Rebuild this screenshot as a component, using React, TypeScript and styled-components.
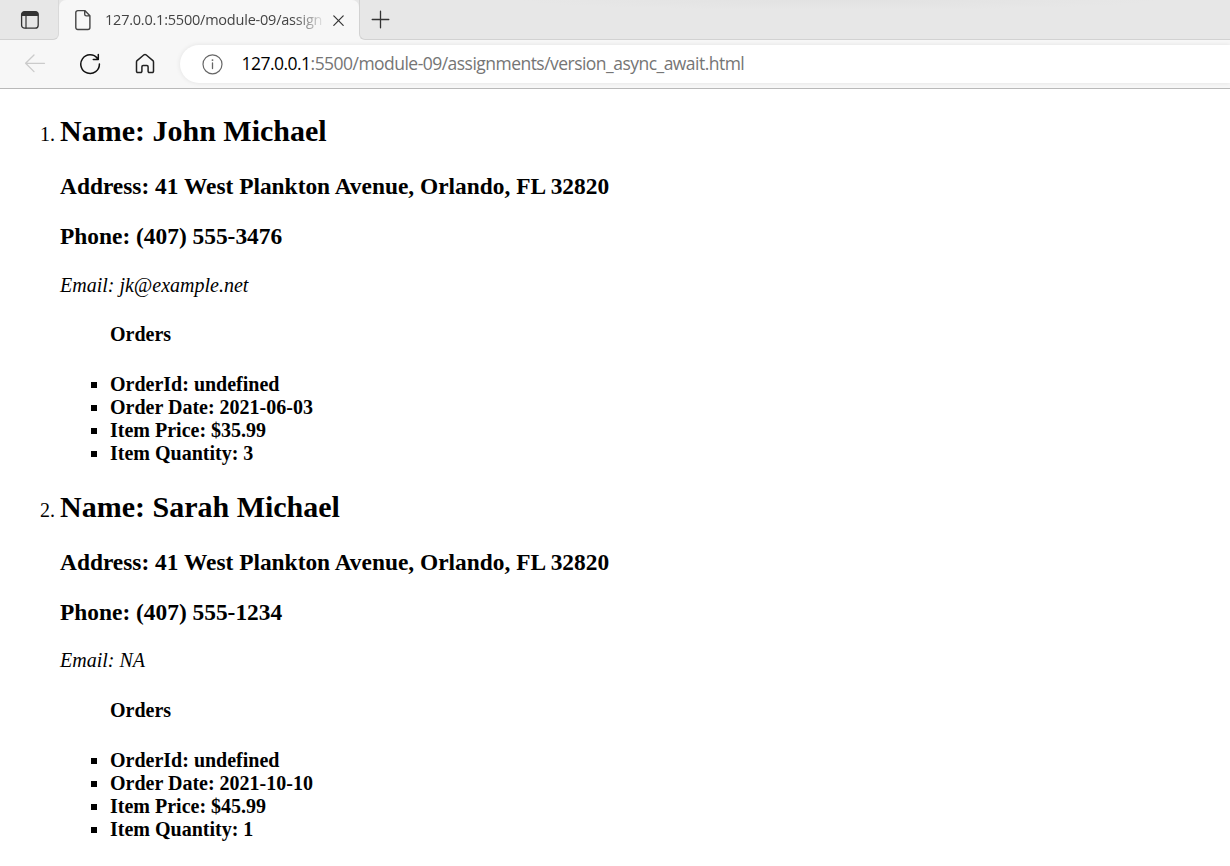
import React from "react";
import styled, { createGlobalStyle } from "styled-components";

const GlobalStyle = createGlobalStyle`
  body { margin: 0; background: #fff; }
`;

const Window = styled.div`
  width: 1230px;
  height: 866px;
  overflow: hidden;
  display: flex;
  flex-direction: column;
  background: #fff;
`;

const BrowserChrome = styled.header`
  flex: none;
  height: 88px;
  display: flex;
  flex-direction: column;
  background: #f7f7f7;
  border-bottom: 1px solid #b9b9b9;
  font-family: "Open Sans", "Noto Sans", sans-serif;
`;

const TabStrip = styled.div`
  display: flex;
  height: 40px;
`;

const StripSegment = styled.div<{ $side: "left" | "right" }>`
  box-sizing: border-box;
  display: flex;
  align-items: center;
  height: 40px;
  background: #e7e7e7;
  border-bottom: 1px solid #d2d2d2;
  ${({ $side }) =>
    $side === "left"
      ? `width: 59px; padding-left: 20px; border-right: 1px solid #d9d9d9; border-bottom-right-radius: 6px;`
      : `flex: 1; padding-left: 11px; border-left: 1px solid #d2d2d2; border-bottom-left-radius: 6px;
         background: radial-gradient(ellipse 320px 10px at 480px 0, #e2e2e2, #e7e7e7);`}
`;

const TabSlot = styled.div`
  background: #e7e7e7;
  width: 300px;
  height: 34px;
`;

const Tab = styled.div`
  box-sizing: border-box;
  display: flex;
  align-items: center;
  width: 300px;
  height: 40px;
  padding: 0 12px 0 16px;
  background: #f7f7f7;
  border-radius: 7px 7px 0 0;
`;

const TabTitle = styled.span`
  width: 219px;
  margin-left: 13px;
  margin-right: 9px;
  overflow: hidden;
  white-space: nowrap;
  font-size: 14.5px;
  line-height: 24px;
  letter-spacing: -0.22px;
  color: #444;
  mask-image: linear-gradient(to right, #000 188px, transparent 221px);
`;

const Toolbar = styled.div`
  display: flex;
  align-items: center;
  height: 48px;
  padding-left: 24px;
`;

const NavIcon = styled.span`
  display: flex;
  width: 55px;
`;

const AddressBar = styled.div`
  box-sizing: border-box;
  display: flex;
  align-items: center;
  flex: 1;
  height: 38px;
  margin-left: -9px;
  padding-left: 22px;
  border-radius: 19px 0 0 19px;
  background: #fff;
  box-shadow: 0 0 5px rgba(0, 0, 0, 0.09);
`;

const Url = styled.span`
  margin: 0 0 2px 18.5px;
  font-size: 17.5px;
  line-height: 26px;
  letter-spacing: -0.53px;
  white-space: nowrap;
  color: #757575;
`;

const Host = styled.span`
  color: #000;
`;

const Page = styled.main`
  flex: 1;
  display: flow-root;
  padding: 0 10px;
  font-family: "Liberation Serif", "Times New Roman", serif;
  font-size: 20px;
  color: #000;
`;

const CustomerList = styled.ol`
  margin: 25px 0 0;
  padding-left: 50px;
`;

const Name = styled.h2`
  margin: 25px 0;
  font-size: 30px;
  line-height: 34px;

  li:first-child > & { margin-top: 0; }
`;

const Detail = styled.h3`
  margin: 23px 0;
  font-size: 23.4px;
  line-height: 27px;
`;

const Email = styled.em`
  display: block;
  margin-top: 24px;
  line-height: 23px;

  li:last-child > & { margin-top: 23px; }
`;

const Orders = styled.ul`
  margin: 0;
  padding-left: 50px;
  list-style-type: square;
  font-weight: bold;
  line-height: 23px;
`;

const OrdersTitle = styled.h4`
  margin: 26px 0 27px;
  font-size: 20px;

  li:last-child > ul > & { margin-top: 27px; }
`;

const stroke = {
  fill: "none",
  stroke: "currentColor",
  strokeLinecap: "round",
  strokeLinejoin: "round",
} as const;

const TabActionsIcon = () => (
  <svg width="20" height="20" viewBox="0 0 20 20" color="#333">
    <rect x="1.6" y="1.6" width="16.6" height="16.6" rx="3" {...stroke} strokeWidth="1.3" />
    <path d="M1.5 6V4.4a3 3 0 0 1 3-3h10.8a3 3 0 0 1 3 3V6z" fill="currentColor" />
    <path d="M6 6v12" {...stroke} strokeWidth="1.2" />
  </svg>
);

const FileIcon = () => (
  <svg width="17" height="22" viewBox="0 0 17 22" color="#444">
    <path d="M2.8 1.6h7l5.1 5.2v11.7a2 2 0 0 1-2 2H2.8a2 2 0 0 1-2-2V3.6a2 2 0 0 1 2-2zM9.7 1.8v3.4a1.7 1.7 0 0 0 1.7 1.7h3.4" {...stroke} strokeWidth="1.4" />
  </svg>
);

const CloseIcon = () => (
  <svg width="12" height="12" viewBox="0 0 12 12" color="#333">
    <path d="M0.8 1.9l9.4 9.4M10.2 1.9l-9.4 9.4" {...stroke} strokeWidth="1.2" />
  </svg>
);

const PlusIcon = () => (
  <svg width="19" height="19" viewBox="0 0 19 19" color="#333">
    <path d="M1.2 9.5h16.6M9.5 1.2v16.6" {...stroke} strokeWidth="1.3" />
  </svg>
);

const BackIcon = () => (
  <svg width="22" height="22" viewBox="0 0 22 22" color="#cbcbcb">
    <path d="M20.5 10.3H1.6M10 2l-8.4 8.3L10 18.6" {...stroke} strokeWidth="1.3" />
  </svg>
);

const ReloadIcon = () => (
  <svg width="22" height="22" viewBox="0 0 22 22" color="#111">
    <path d="M18.5 5.5A9.3 9.3 0 1 0 20.4 11M19.3 1.4v5h-5" {...stroke} strokeWidth="1.5" />
  </svg>
);

const HomeIcon = () => (
  <svg width="22" height="22" viewBox="0 0 22 22" color="#222">
    <path d="M2.5 8.9a1.7 1.7 0 0 1 .6-1.3l6.9-5.8a1.6 1.6 0 0 1 2 0l6.9 5.8a1.7 1.7 0 0 1 .6 1.3v9.4a1.2 1.2 0 0 1-1.2 1.2h-3a1.2 1.2 0 0 1-1.2-1.2v-4.6a1.2 1.2 0 0 0-1.2-1.2H9.1a1.2 1.2 0 0 0-1.2 1.2v4.6a1.2 1.2 0 0 1-1.2 1.2h-3a1.2 1.2 0 0 1-1.2-1.2z" {...stroke} strokeWidth="1.5" />
  </svg>
);

const InfoIcon = () => (
  <svg width="21" height="21" viewBox="0 0 21 21" color="#666">
    <circle cx="10.5" cy="10.3" r="9.5" {...stroke} strokeWidth="1.2" />
    <path d="M10.5 9v5.5" {...stroke} strokeWidth="1.3" />
    <circle cx="10.5" cy="6.1" r="0.95" fill="currentColor" />
  </svg>
);

const customers = [
  { name: "John Michael", phone: "(407) 555-3476", email: "jk@example.net", date: "2021-06-03", price: "$35.99", quantity: 3 },
  { name: "Sarah Michael", phone: "(407) 555-1234", email: "NA", date: "2021-10-10", price: "$45.99", quantity: 1 },
];

export default function App() {
  return (
    <Window>
      <GlobalStyle />
      <BrowserChrome>
        <TabStrip>
          <StripSegment $side="left"><TabActionsIcon /></StripSegment>
          <TabSlot>
            <Tab>
              <FileIcon />
              <TabTitle>127.0.0.1:5500/module-09/assign</TabTitle>
              <CloseIcon />
            </Tab>
          </TabSlot>
          <StripSegment $side="right"><PlusIcon /></StripSegment>
        </TabStrip>
        <Toolbar>
          <NavIcon><BackIcon /></NavIcon>
          <NavIcon><ReloadIcon /></NavIcon>
          <NavIcon><HomeIcon /></NavIcon>
          <AddressBar>
            <InfoIcon />
            <Url><Host>127.0.0.1</Host>:5500/module-09/assignments/version_async_await.html</Url>
          </AddressBar>
        </Toolbar>
      </BrowserChrome>
      <Page>
        <CustomerList>
          {customers.map((c) => (
            <li key={c.name}>
              <Name>{`Name: ${c.name}`}</Name>
              <Detail>Address: 41 West Plankton Avenue, Orlando, FL 32820</Detail>
              <Detail>{`Phone: ${c.phone}`}</Detail>
              <Email>{`Email: ${c.email}`}</Email>
              <Orders>
                <OrdersTitle>Orders</OrdersTitle>
                <li>OrderId: undefined</li>
                <li>{`Order Date: ${c.date}`}</li>
                <li>{`Item Price: ${c.price}`}</li>
                <li>{`Item Quantity: ${c.quantity}`}</li>
              </Orders>
            </li>
          ))}
        </CustomerList>
      </Page>
    </Window>
  );
}
